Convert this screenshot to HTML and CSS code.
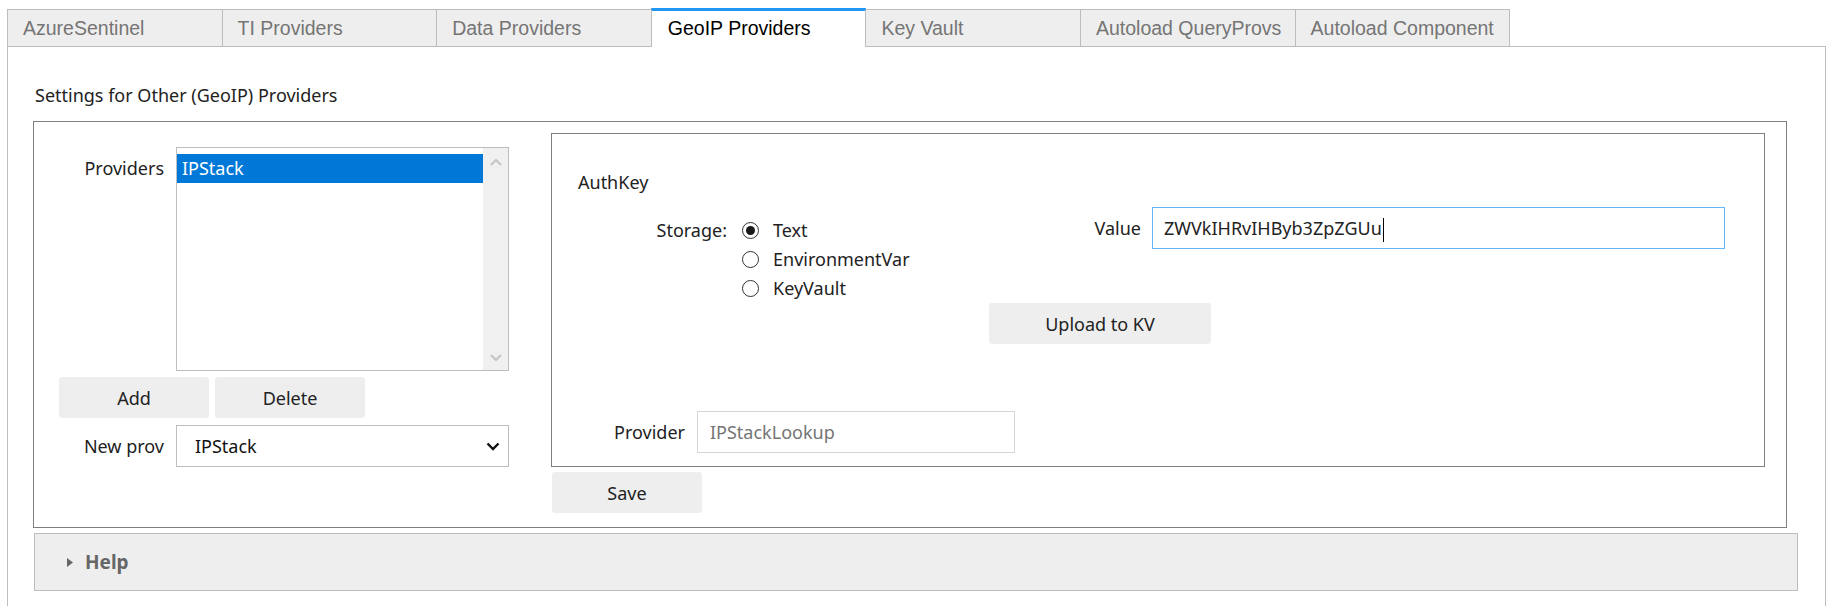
FILE: index.html
```html
<!DOCTYPE html>
<html>
<head>
<meta charset="utf-8">
<link rel="stylesheet" href="styles.css">
</head>
<body>
<div class="app">
  <div class="tabbar">
    <div class="tab">AzureSentinel</div>
    <div class="tab">TI Providers</div>
    <div class="tab">Data Providers</div>
    <div class="tab active">GeoIP Providers</div>
    <div class="tab">Key Vault</div>
    <div class="tab">Autoload QueryProvs</div>
    <div class="tab">Autoload Component</div>
  </div>
  <div class="panel">
    <div class="title">Settings for Other (GeoIP) Providers</div>
    <div class="group">
      <div class="left">
        <div class="row1">
          <div class="lbl">Providers</div>
          <div class="listbox">
            <div class="items"><div class="item sel">IPStack</div></div>
            <div class="vscroll">
              <svg width="12" height="8" viewBox="0 0 12 8"><path d="M1 7 L6 2 L11 7" fill="none" stroke="#c4c4c4" stroke-width="2"/></svg>
              <svg width="12" height="8" viewBox="0 0 12 8"><path d="M1 1 L6 6 L11 1" fill="none" stroke="#c4c4c4" stroke-width="2"/></svg>
            </div>
          </div>
        </div>
        <div class="btnrow">
          <button class="btn">Add</button>
          <button class="btn">Delete</button>
        </div>
        <div class="row3">
          <div class="lbl lbl3">New prov</div>
          <div class="select">
            <span>IPStack</span>
            <svg width="14" height="9" viewBox="0 0 14 9"><path d="M1.5 1.5 L7 7 L12.5 1.5" fill="none" stroke="#111" stroke-width="2.4"/></svg>
          </div>
        </div>
      </div>
      <div class="right">
        <div class="inner">
          <div class="heading">AuthKey</div>
          <div class="srow">
            <div class="storage">
              <div class="slbl">Storage:</div>
              <div class="radios">
                <div class="radio"><span class="circle checked"></span><span>Text</span></div>
                <div class="radio"><span class="circle"></span><span>EnvironmentVar</span></div>
                <div class="radio"><span class="circle"></span><span>KeyVault</span></div>
              </div>
            </div>
            <div class="value">
              <div class="vlbl">Value</div>
              <div class="input focus">ZWVkIHRvIHByb3ZpZGUu<span class="caret"></span></div>
            </div>
          </div>
          <div class="uprow"><button class="btn upload">Upload to KV</button></div>
          <div class="prow">
            <div class="plbl">Provider</div>
            <div class="input ro">IPStackLookup</div>
          </div>
        </div>
        <button class="btn save">Save</button>
      </div>
    </div>
    <div class="help">
      <svg width="6" height="9" viewBox="0 0 6 9"><path d="M0 0 L6 4.5 L0 9 Z" fill="#666"/></svg>
      <span class="helptxt">Help</span>
    </div>
  </div>
</div>
</body>
</html>
```

FILE: styles.css
```css
body {
  margin: 0;
  background: #fff;
  font-family: "Noto Sans", sans-serif;
  font-size: 18px;
  color: #222;
  overflow: hidden;
}
.app {
  padding-left: 7px;
}
.tabbar {
  display: flex;
  align-items: flex-end;
  height: 38px;
  padding-top: 8px;
}
.tab {
  box-sizing: border-box;
  flex: 0 0 215.6px;
  height: 37px;
  margin-left: -1px;
  border: 1px solid #bdbdbd;
  border-bottom: none;
  background: #eeeeee;
  color: #757575;
  font-family: "Liberation Sans", Arial, sans-serif;
  font-size: 19.5px;
  line-height: 36px;
  padding: 0 15px;
  white-space: nowrap;
  overflow: hidden;
}
.tab:first-child {
  margin-left: 0;
}
.tab.active {
  height: 39px;
  margin-bottom: -1px;
  background: #fff;
  color: #000;
  border-top: 3px solid #2196f3;
  line-height: 34px;
  padding-left: 16px;
  position: relative;
  z-index: 1;
}
.panel {
  box-sizing: border-box;
  width: 1819px;
  height: 560px;
  border: 1px solid #bdbdbd;
  border-bottom: none;
  padding-left: 25px;
}
.title {
  padding-top: 34px;
  padding-left: 2px;
  line-height: 28px;
}
.group {
  box-sizing: border-box;
  width: 1754px;
  margin-top: 12px;
  border: 1px solid #808080;
  display: flex;
  padding-bottom: 14px;
}
.left {
  flex: none;
  width: 475px;
}
.row1 {
  display: flex;
  margin-top: 25px;
}
.lbl {
  width: 130px;
  margin-right: 12px;
  text-align: right;
  line-height: 28px;
  padding-top: 7px;
  flex: none;
}
.listbox {
  box-sizing: border-box;
  width: 333px;
  height: 224px;
  border: 1px solid #bdbdbd;
  display: flex;
}
.items {
  flex: 1;
  padding-top: 6px;
}
.item {
  height: 29px;
  line-height: 29px;
  padding-left: 5px;
}
.item.sel {
  background: #0078d7;
  color: #fff;
}
.vscroll {
  box-sizing: border-box;
  width: 25px;
  background: #f0f0f0;
  display: flex;
  flex-direction: column;
  justify-content: space-between;
  align-items: center;
  padding: 10px 0 8px;
}
.vscroll svg {
  display: block;
}
.btnrow {
  display: flex;
  gap: 6px;
  margin-top: 6px;
  margin-left: 25px;
}
.btn {
  box-sizing: border-box;
  width: 150px;
  height: 41px;
  border: none;
  border-radius: 3px;
  background: #eeeeee;
  font-family: "Noto Sans", sans-serif;
  font-size: 18px;
  color: #222;
  padding: 0;
}
.row3 {
  display: flex;
  align-items: center;
  margin-top: 7px;
}
.lbl3 {
  padding-top: 0;
}
.select {
  box-sizing: border-box;
  width: 333px;
  height: 42px;
  border: 1px solid #bdbdbd;
  display: flex;
  align-items: center;
  justify-content: space-between;
  padding: 0 8px 0 18px;
  color: #111;
}
.select svg {
  display: block;
}
.right {
  flex: none;
  margin-left: 42px;
  margin-top: 11px;
}
.inner {
  box-sizing: border-box;
  width: 1214px;
  height: 334px;
  border: 1px solid #808080;
  padding: 34px 0 0 26px;
}
.heading {
  line-height: 28px;
}
.srow {
  display: flex;
  align-items: flex-start;
  margin-top: 11px;
}
.storage {
  display: flex;
  padding-top: 8.5px;
}
.slbl {
  width: 149px;
  margin-right: 14px;
  text-align: right;
  line-height: 29px;
}
.radio {
  display: flex;
  align-items: center;
  height: 29px;
}
.circle {
  box-sizing: border-box;
  width: 17px;
  height: 17px;
  border: 1px solid #333;
  border-radius: 50%;
  margin-left: 1px;
  margin-right: 14px;
  display: flex;
  align-items: center;
  justify-content: center;
  background: #fff;
}
.circle.checked::after {
  content: "";
  width: 9px;
  height: 9px;
  border-radius: 50%;
  background: #1a1a1a;
}
.value {
  display: flex;
  align-items: center;
  margin-left: auto;
  margin-right: 39px;
}
.vlbl {
  margin-right: 11px;
}
.input {
  box-sizing: border-box;
  height: 42px;
  border: 1px solid #d6d6d6;
  padding-left: 11px;
  line-height: 40px;
  white-space: nowrap;
}
.input.focus {
  width: 573px;
  border-color: #64b5f6;
  color: #222;
}
.caret {
  display: inline-block;
  width: 1px;
  height: 24px;
  background: #000;
  vertical-align: middle;
  margin-left: 1px;
}
.uprow {
  padding-left: 411px;
  margin-top: 0.5px;
}
.btn.upload {
  width: 222px;
}
.prow {
  display: flex;
  align-items: center;
  margin-top: 67px;
}
.plbl {
  width: 107px;
  margin-right: 12px;
  text-align: right;
}
.input.ro {
  width: 318px;
  padding-left: 12px;
  color: #757575;
}
.btn.save {
  display: block;
  margin-top: 5px;
  margin-left: 1px;
}
.help {
  box-sizing: border-box;
  width: 1764px;
  height: 58px;
  margin-top: 5px;
  margin-left: 1px;
  background: #eeeeee;
  border: 1px solid #bdbdbd;
  display: flex;
  align-items: center;
  padding-left: 32px;
}
.help svg {
  display: block;
  margin-right: 12px;
}
.helptxt {
  font-weight: bold;
  color: #666;
  font-size: 19px;
}
```
